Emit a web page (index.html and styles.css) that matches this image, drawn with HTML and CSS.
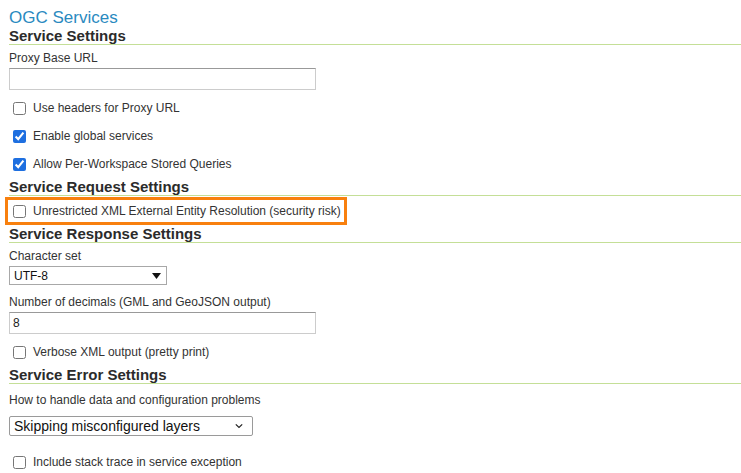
FILE: index.html
```html
<!DOCTYPE html>
<html>
<head>
    <meta charset="UTF-8">
    <title>OGC Services</title>
    <link rel="stylesheet" href="styles.css">
</head>
<body>
    <div class="page">
        <h1 class="page-title">OGC Services</h1>

        <h2 class="section-title">Service Settings</h2>
        <div class="field">
            <label class="field-label" for="proxy">Proxy Base URL</label>
            <input class="text-input" id="proxy" type="text">
        </div>
        <label class="check-row"><input type="checkbox"> Use headers for Proxy URL</label>
        <label class="check-row"><input type="checkbox" checked> Enable global services</label>
        <label class="check-row"><input type="checkbox" checked> Allow Per-Workspace Stored Queries</label>

        <h2 class="section-title">Service Request Settings</h2>
        <div class="highlight">
            <label class="check-row"><input type="checkbox"> Unrestricted XML External Entity Resolution (security risk)</label>
        </div>

        <h2 class="section-title">Service Response Settings</h2>
        <div class="field">
            <label class="field-label" for="charset">Character set</label>
            <span class="select-wrap charset">
                <select id="charset" class="select-plain">
                    <option>UTF-8</option>
                </select>
                <svg class="select-arrow" width="9" height="6" viewBox="0 0 9 6"><path d="M0 0h9L4.5 6z" fill="#111"/></svg>
            </span>
        </div>
        <div class="field">
            <label class="field-label" for="decimals">Number of decimals (GML and GeoJSON output)</label>
            <input class="text-input" id="decimals" type="text" value="8">
        </div>
        <label class="check-row"><input type="checkbox"> Verbose XML output (pretty print)</label>

        <h2 class="section-title">Service Error Settings</h2>
        <div class="field field-loose">
            <label class="field-label" for="errors">How to handle data and configuration problems</label>
            <span class="select-wrap errors">
                <select id="errors" class="select-mac">
                    <option>Skipping misconfigured layers</option>
                </select>
                <svg class="select-arrow" width="8" height="5" viewBox="0 0 8 5"><path d="M0.8 0.8L4 4L7.2 0.8" fill="none" stroke="#222" stroke-width="1.2"/></svg>
            </span>
        </div>
        <label class="check-row"><input type="checkbox"> Include stack trace in service exception</label>
    </div>
</body>
</html>
```

FILE: styles.css
```css
body, html {
    margin: 0;
    padding: 0;
    background: #fff;
}

.page {
    padding: 8px 0 0 9px;
    font-family: "Liberation Sans", Arial, sans-serif;
    font-size: 12px;
    color: #333;
}

.page-title {
    margin: 0;
    font-size: 17px;
    font-weight: normal;
    line-height: 20px;
    color: #2a8abf;  /* GeoServer blue */
}

.section-title {
    margin: 1px 0 0;
    font-size: 15px;
    font-weight: bold;
    line-height: 16px;
    color: #2b2b2b;
    border-bottom: 1px solid #c4df97;  /* soft green rule */
}

.page-title + .section-title {
    margin-top: 0;
}

.field {
    display: flex;
    flex-direction: column;
    align-items: flex-start;
    padding-top: 6px;
    margin-bottom: 4px;
}

.field-loose {
    padding-top: 9px;
    margin-bottom: 12px;
}

.field-label {
    line-height: 14px;
    margin-bottom: 3px;
}

.text-input {
    box-sizing: border-box;
    width: 307px;
    height: 22px;
    margin: 0;
    padding: 1px 3px;
    border: 1px solid #ccc;
    border-top-color: #999;
    font-family: "Liberation Sans", Arial, sans-serif;
    font-size: 12px;
    color: #222;
}

.check-row {
    display: flex;
    align-items: center;
    height: 28px;
    color: #333;
}

.check-row input {
    width: 13px;
    height: 13px;
    margin: 0 7px 0 4px;
    accent-color: #1e6fe0;
}

.highlight {
    width: fit-content;
    margin: 1px 0 0 -4px;
    border: 3px solid #f8800e;  /* orange callout */
}

.highlight .check-row {
    height: 22px;
    padding-right: 3px;
}

.highlight .check-row input {
    margin-left: 5px;
}

.select-wrap {
    position: relative;
    display: inline-block;
}

.select-wrap select {
    appearance: none;
    -webkit-appearance: none;
    display: block;
    margin: 0;
    background: #fff;
    color: #111;
}

.select-arrow {
    position: absolute;
    top: 50%;
    transform: translateY(-50%);
    pointer-events: none;
}

.select-plain {
    box-sizing: border-box;
    width: 158px;
    height: 19px;
    padding: 0 4px;
    border: 1px solid #a8a8a8;
    border-radius: 0;
    font-family: "Liberation Sans", Arial, sans-serif;
    font-size: 12px;
}

.charset .select-arrow {
    right: 6px;
}

.select-mac {
    box-sizing: border-box;
    width: 244px;
    height: 20px;
    padding: 0 4px;
    border: 1px solid #9a9a9a;
    border-radius: 2px;
    font-family: "Liberation Sans", Arial, sans-serif;
    font-size: 14px;
}

.errors {
    margin-top: 6px;
}

.errors .select-arrow {
    right: 10px;
}
```
